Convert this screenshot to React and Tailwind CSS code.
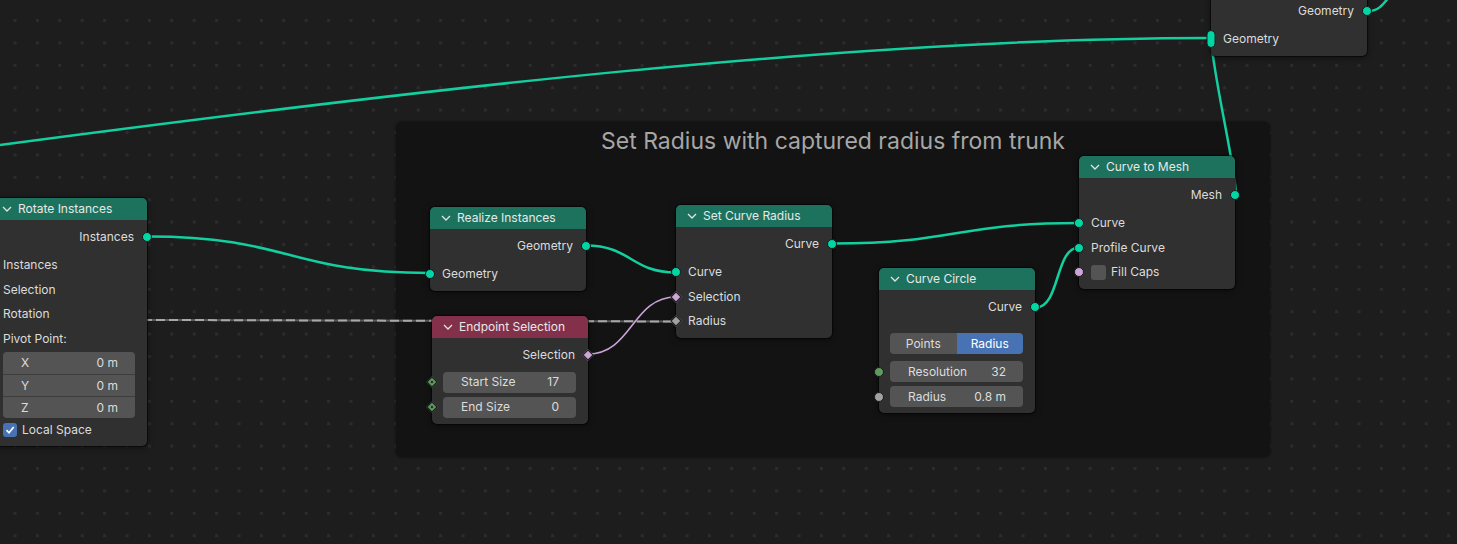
import React from "react";

const TEAL = "#13cf9f";

// socket styles, written out in full
const SOCK = {
  geo: "h-[10px] w-[10px] rounded-full bg-[#00d6a3] border border-[#1a1a1a]",
  geoPill: "h-[18px] w-[9px] rounded-full bg-[#00d6a3] border border-[#1a1a1a]",
  bool: "h-[8px] w-[8px] rotate-45 bg-[#cca6d6] border border-[#1a1a1a]",
  float: "h-[8px] w-[8px] rotate-45 bg-[#a1a1a1] border border-[#1a1a1a]",
  intDot: "flex h-[8px] w-[8px] rotate-45 items-center justify-center bg-[#5f9960] border border-[#1a1a1a]",
  intCirc: "h-[10px] w-[10px] rounded-full bg-[#5f9960] border border-[#1a1a1a]",
  floatCirc: "h-[10px] w-[10px] rounded-full bg-[#a1a1a1] border border-[#1a1a1a]",
  boolCirc: "h-[10px] w-[10px] rounded-full bg-[#cca6d6] border border-[#1a1a1a]",
};

function Sock({ kind, side }) {
  const pos =
    side === "r"
      ? "absolute right-0 top-1/2 translate-x-1/2 -translate-y-1/2"
      : "absolute left-0 top-1/2 -translate-x-1/2 -translate-y-1/2";
  return (
    <span className={pos}>
      <span className={"block " + SOCK[kind]}>
        {kind === "intDot" && <span className="block h-[2px] w-[2px] bg-[#1d1d1d]" />}
      </span>
    </span>
  );
}

function Chevron() {
  return (
    <svg width="10" height="6" viewBox="0 0 10 6" className="shrink-0">
      <polyline points="1,1 5,5 9,1" fill="none" stroke="#e2e2e2" strokeWidth="1.3" />
    </svg>
  );
}

function Node({ pos, header, title, children }) {
  return (
    <div
      className={
        "absolute w-[156px] rounded-[5px] bg-[#303030] shadow-[0_1px_6px_rgba(0,0,0,0.55)] ring-1 ring-black/50 " +
        pos
      }
    >
      {title && (
        <div className={"flex h-[22px] items-center gap-[6px] rounded-t-[5px] pl-[11px] text-[#e8e8e8] " + header}>
          <Chevron />
          <span>{title}</span>
        </div>
      )}
      <div className="pt-[5px] pb-[4px]">{children}</div>
    </div>
  );
}

function Out({ label, sock = "geo" }) {
  return (
    <div className="relative mb-[4px] flex h-[24px] items-center justify-end pr-[13px]">
      {label}
      <Sock kind={sock} side="r" />
    </div>
  );
}

function In({ label, sock }) {
  return (
    <div className="relative flex h-[24.5px] items-center pl-[12px]">
      {label}
      {sock && <Sock kind={sock} side="l" />}
    </div>
  );
}

function Field({ label, value, sock, className = "" }) {
  return (
    <div className={"relative flex h-[21px] pl-[11px] pr-[12px] " + className}>
      <div className="flex flex-1 items-center justify-between rounded-[4px] bg-[#545454] pl-[18px] pr-[17px]">
        <span>{label}</span>
        <span>{value}</span>
      </div>
      {sock && <Sock kind={sock} side="l" />}
    </div>
  );
}

function Check() {
  return (
    <svg width="10" height="10" viewBox="0 0 10 10">
      <polyline points="1.5,5.2 4,7.8 8.7,2" fill="none" stroke="#fff" strokeWidth="1.7" />
    </svg>
  );
}

export default function App() {
  return (
    <div className="relative h-[544px] w-[1457px] overflow-hidden bg-[#1d1d1d] font-['Inter',sans-serif] text-[12px] text-[#dcdcdc]">
      {/* dot grid */}
      <svg className="absolute inset-0" width="1457" height="544">
        <defs>
          <pattern id="dots" x="13.5" y="19" width="22.4" height="22.4" patternUnits="userSpaceOnUse">
            <rect x="0" y="0" width="3" height="3" fill="#2c2c2c" />
          </pattern>
        </defs>
        <rect width="1457" height="544" fill="url(#dots)" />
      </svg>

      {/* frame */}
      <div className="absolute left-[396px] top-[122px] flex h-[335px] w-[874px] justify-center rounded-[6px] bg-[#131313] pt-[2px] shadow-[0_0_3px_rgba(0,0,0,0.6)]">
        <span className="text-[23px] leading-[34px] text-[#a6a6a6]">Set Radius with captured radius from trunk</span>
      </div>

      {/* wires */}
      <svg className="absolute inset-0" width="1457" height="544" fill="none">
        <path d="M 0 145 C 400 92, 850 38, 1209 38" stroke={TEAL} strokeWidth="2.5" />
        <path d="M 148 236.5 C 290 236.5, 288 273, 429 273" stroke={TEAL} strokeWidth="2.5" />
        <path d="M 586 245.5 C 631 245.5, 631 272.5, 676 272.5" stroke={TEAL} strokeWidth="2.5" />
        <path d="M 833 243.5 C 956 243.5, 956 223, 1079 223" stroke={TEAL} strokeWidth="2.5" />
        <path d="M 1036 307.5 C 1060 307.5, 1055 247.5, 1079 247.5" stroke={TEAL} strokeWidth="2.5" />
        <path d="M 1236 195 C 1236 170, 1214 80, 1211 39" stroke={TEAL} strokeWidth="2.5" />
        <path d="M 1368 11 C 1378 11, 1382 6, 1389 -3" stroke={TEAL} strokeWidth="2.5" />
        <path d="M 0 319.5 L 676 321.5" stroke="#5a5a5a" strokeWidth="2" />
        <path d="M 0 319.5 L 676 321.5" stroke="#a8a8a8" strokeWidth="2" strokeDasharray="9 4" />
        <path d="M 588 354 C 632 354, 632 297, 676 297" stroke="#c9a2d8" strokeWidth="1.6" />
      </svg>

      {/* top right node (header off-screen) */}
      <Node pos="left-[1211px] top-[-6px]">
        <Out label="Geometry" />
        <div className="relative flex h-[24.5px] items-center pl-[12px]">
          Geometry
          <Sock kind="geoPill" side="l" />
        </div>
      </Node>

      {/* Rotate Instances */}
      <Node pos="left-[-9px] top-[198px]" header="bg-[#1d725e]" title="Rotate Instances">
        <Out label="Instances" />
        <In label="Instances" />
        <In label="Selection" />
        <In label="Rotation" />
        <In label="Pivot Point:" />
        <div className="mt-[1px] ml-[12px] mr-[12px] flex flex-col overflow-hidden rounded-[4px] bg-[#545454]">
          {["X", "Y", "Z"].map((a, i) => (
            <div
              key={a}
              className={
                "flex h-[22px] items-center justify-between pl-[18px] pr-[17px] " +
                (i > 0 ? "border-t border-[#3d3d3d]" : "")
              }
            >
              <span>{a}</span>
              <span>0 m</span>
            </div>
          ))}
        </div>
        <div className="flex h-[24px] items-center gap-[5px] pl-[12px]">
          <span className="flex h-[14px] w-[14px] items-center justify-center rounded-[3px] bg-[#4772b3]">
            <Check />
          </span>
          Local Space
        </div>
      </Node>

      {/* Realize Instances */}
      <Node pos="left-[430px] top-[207px]" header="bg-[#1d725e]" title="Realize Instances">
        <Out label="Geometry" />
        <In label="Geometry" sock="geo" />
      </Node>

      {/* Endpoint Selection */}
      <Node pos="left-[432px] top-[316px]" header="bg-[#83314a]" title="Endpoint Selection">
        <Out label="Selection" sock="bool" />
        <Field label="Start Size" value="17" sock="intDot" className="mt-[4.5px]" />
        <Field label="End Size" value="0" sock="intDot" className="mt-[4px] mb-[2px]" />
      </Node>

      {/* Set Curve Radius */}
      <Node pos="left-[676px] top-[205px]" header="bg-[#1d725e]" title="Set Curve Radius">
        <Out label="Curve" />
        <In label="Curve" sock="geo" />
        <In label="Selection" sock="bool" />
        <In label="Radius" sock="float" />
      </Node>

      {/* Curve Circle */}
      <Node pos="left-[879px] top-[268px]" header="bg-[#1d725e]" title="Curve Circle">
        <Out label="Curve" />
        <div className="mt-[14px] flex h-[21px] pl-[11px] pr-[12px]">
          <div className="flex flex-1 items-center justify-center rounded-l-[4px] bg-[#545454]">Points</div>
          <div className="flex flex-1 items-center justify-center rounded-r-[4px] bg-[#4772b3] text-white">Radius</div>
        </div>
        <Field label="Resolution" value="32" sock="intCirc" className="mt-[7px]" />
        <Field label="Radius" value="0.8 m" sock="floatCirc" className="mt-[4px] mb-[2px]" />
      </Node>

      {/* Curve to Mesh */}
      <Node pos="left-[1079px] top-[156px]" header="bg-[#1d725e]" title="Curve to Mesh">
        <Out label="Mesh" />
        <In label="Curve" sock="geo" />
        <In label="Profile Curve" sock="geo" />
        <div className="relative flex h-[24.5px] items-center gap-[5px] pl-[12px]">
          <span className="h-[15px] w-[15px] rounded-[3px] bg-[#545454]" />
          Fill Caps
          <Sock kind="boolCirc" side="l" />
        </div>
      </Node>
    </div>
  );
}
